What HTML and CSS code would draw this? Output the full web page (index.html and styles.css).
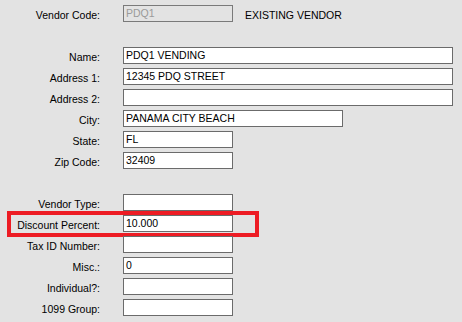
FILE: index.html
```html
<!DOCTYPE html>
<html lang="en">
  <head>
    <meta charset="UTF-8" />
    <title>Vendor</title>
    <link rel="stylesheet" href="styles.css">
  </head>
  <body>
    <div class="form">
      <div class="row">
        <label>Vendor Code:</label>
        <div class="field short disabled">PDQ1</div>
        <span class="status">EXISTING VENDOR</span>
      </div>
      <div class="row"></div>
      <div class="row">
        <label>Name:</label>
        <div class="field">PDQ1 VENDING</div>
      </div>
      <div class="row">
        <label>Address 1:</label>
        <div class="field">12345 PDQ STREET</div>
      </div>
      <div class="row">
        <label>Address 2:</label>
        <div class="field"></div>
      </div>
      <div class="row">
        <label>City:</label>
        <div class="field medium">PANAMA CITY BEACH</div>
      </div>
      <div class="row">
        <label>State:</label>
        <div class="field short">FL</div>
      </div>
      <div class="row">
        <label>Zip Code:</label>
        <div class="field short">32409</div>
      </div>
      <div class="row"></div>
      <div class="row">
        <label>Vendor Type:</label>
        <div class="field short"></div>
      </div>
      <div class="row highlight">
        <label>Discount Percent:</label>
        <div class="field short">10.000</div>
      </div>
      <div class="row">
        <label>Tax ID Number:</label>
        <div class="field short"></div>
      </div>
      <div class="row">
        <label>Misc.:</label>
        <div class="field short">0</div>
      </div>
      <div class="row">
        <label>Individual?:</label>
        <div class="field short"></div>
      </div>
      <div class="row">
        <label>1099 Group:</label>
        <div class="field short"></div>
      </div>
    </div>
  </body>
</html>
```

FILE: styles.css
```css
body {
  margin: 0;
  background-color: #e3e3e3;
  font-family: "Liberation Sans", Arial, sans-serif;
  font-size: 10.5px;
  color: #000;
}
.form {
  padding-top: 5px;
}
.row {
  display: flex;
  align-items: flex-start;
  height: 21px;
  position: relative;
}
.row label {
  width: 100px;
  margin-right: 23px;
  text-align: right;
  padding-top: 4px;
  line-height: 13px;
  white-space: nowrap;
}
.field {
  box-sizing: border-box;
  width: 330px;
  height: 17px;
  border: 1px solid #6b6b6b;
  background-color: #fff;
  padding: 1px 2px 0 2px;
  line-height: 13px;
  white-space: nowrap;
  overflow: hidden;
}
.medium {
  width: 220px;
}
.short {
  width: 110px;
}
.disabled {
  background-color: #e3e3e3;
  border-color: #7a7a7a;
  color: #9a9a9a;
}
.status {
  margin-left: 12px;
  padding-top: 4px;
  line-height: 13px;
}
.highlight::after {
  content: "";
  position: absolute;
  left: 7px;
  top: -4px;
  width: 252px;
  height: 26px;
  box-sizing: border-box;
  border: 4px solid #ed1c24;
}
```
